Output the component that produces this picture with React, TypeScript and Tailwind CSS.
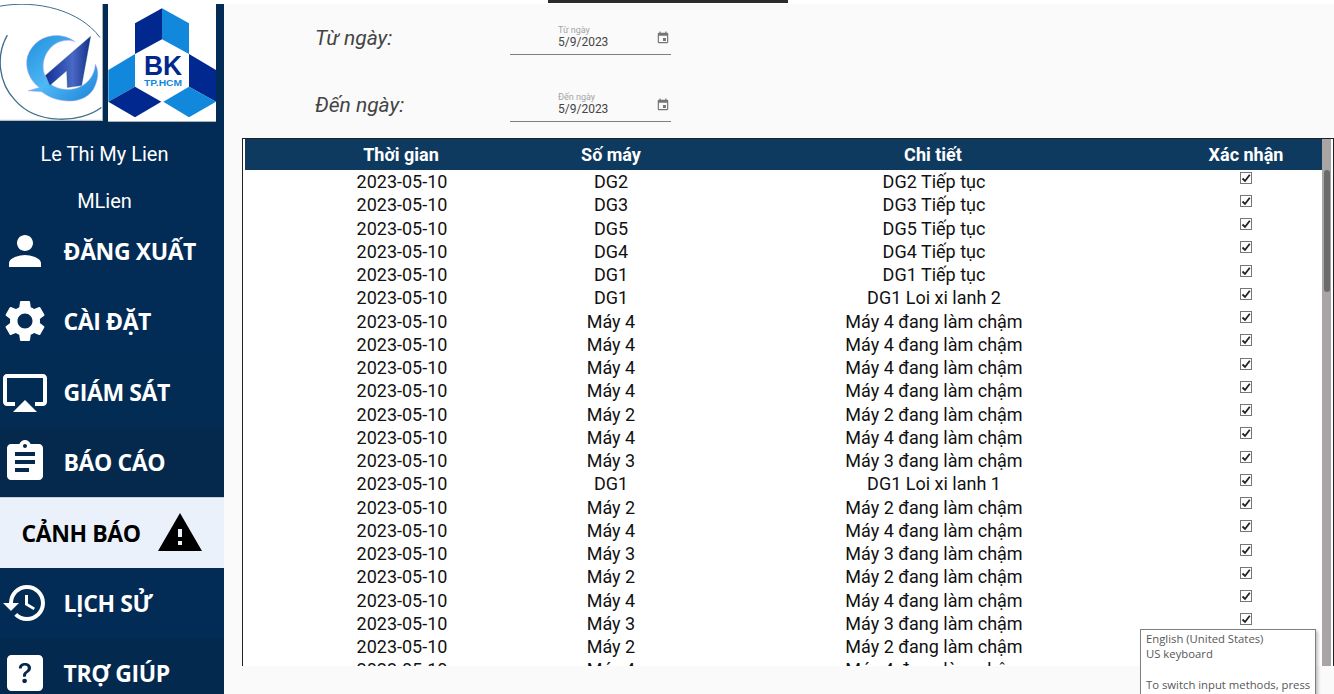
import { MdPerson, MdSettings, MdAirplay, MdAssignment, MdWarning, MdHistory, MdEvent } from 'react-icons/md';
import { BsQuestionSquareFill } from 'react-icons/bs';
import type { ReactNode } from 'react';

const rows: [string, string][] = [
  ['DG2', 'DG2 Tiếp tục'],
  ['DG3', 'DG3 Tiếp tục'],
  ['DG5', 'DG5 Tiếp tục'],
  ['DG4', 'DG4 Tiếp tục'],
  ['DG1', 'DG1 Tiếp tục'],
  ['DG1', 'DG1 Loi xi lanh 2'],
  ['Máy 4', 'Máy 4 đang làm chậm'],
  ['Máy 4', 'Máy 4 đang làm chậm'],
  ['Máy 4', 'Máy 4 đang làm chậm'],
  ['Máy 4', 'Máy 4 đang làm chậm'],
  ['Máy 2', 'Máy 2 đang làm chậm'],
  ['Máy 4', 'Máy 4 đang làm chậm'],
  ['Máy 3', 'Máy 3 đang làm chậm'],
  ['DG1', 'DG1 Loi xi lanh 1'],
  ['Máy 2', 'Máy 2 đang làm chậm'],
  ['Máy 4', 'Máy 4 đang làm chậm'],
  ['Máy 3', 'Máy 3 đang làm chậm'],
  ['Máy 2', 'Máy 2 đang làm chậm'],
  ['Máy 4', 'Máy 4 đang làm chậm'],
  ['Máy 3', 'Máy 3 đang làm chậm'],
  ['Máy 2', 'Máy 2 đang làm chậm'],
  ['Máy 4', 'Máy 4 đang làm chậm'],
];

function LogoApp() {
  return (
    <svg viewBox="0 12 309 350" className="h-[117px] w-[103px] bg-white">
      <defs>
        <linearGradient id="crescent" x1="0" y1="0" x2="1" y2="1">
          <stop offset="0" stopColor="#1f8fdc" />
          <stop offset="0.5" stopColor="#4fb8f5" />
          <stop offset="1" stopColor="#1c82d8" />
        </linearGradient>
        <linearGradient id="dart" x1="0" y1="0" x2="1" y2="0">
          <stop offset="0" stopColor="#12309a" />
          <stop offset="0.6" stopColor="#4a68c4" />
          <stop offset="1" stopColor="#122f8c" />
        </linearGradient>
      </defs>
      <path d="M0 18 C110 -2 240 30 300 112" fill="none" stroke="#3f6f8c" strokeWidth="3" />
      <path d="M22 105 C-15 170 -2 250 45 300 C110 375 240 370 304 322" fill="none" stroke="#3f6f8c" strokeWidth="4" />
      <path
        d="M225 125 C185 92 105 100 82 170 C72 215 100 250 118 262 L84 272 L125 275 C170 312 262 318 286 255 C296 230 296 210 286 192 C282 250 225 282 170 262 C125 245 112 175 160 135 C185 118 210 118 225 125 Z"
        fill="url(#crescent)"
        stroke="#b9a8f2"
        strokeWidth="1.5"
      />
      <path d="M272 108 L245 256 L202 262 L200 212 L150 255 L136 226 Z" fill="url(#dart)" stroke="#1d6a6a" strokeWidth="1" />
      <rect x="306" y="12" width="3" height="350" fill="#aab2b8" />
      <rect x="0" y="359" width="309" height="3" fill="#aab2b8" />
    </svg>
  );
}

function LogoBk() {
  return (
    <svg viewBox="324 12 324 354" className="h-[118px] w-[108px] bg-white">
      <path d="M405 70 L486 25 L486 118 L405 162 Z" fill="#00288f" />
      <path d="M486 25 L567 70 L567 162 L486 118 Z" fill="#1288dc" />
      <path d="M325 210 L405 162 L405 260 L325 305 Z" fill="#1288dc" />
      <path d="M567 162 L648 210 L648 305 L567 260 Z" fill="#00288f" />
      <path d="M325 305 L405 260 L484 305 L405 352 Z" fill="#00288f" />
      <path d="M490 305 L567 260 L648 305 L567 352 Z" fill="#1288dc" />
      <text x="489" y="224" textAnchor="middle" textLength="114" lengthAdjust="spacingAndGlyphs" fontFamily="'Liberation Sans', sans-serif" fontWeight="700" fontSize="82" fill="#00288f">
        BK
      </text>
      <text x="489" y="257" textAnchor="middle" textLength="114" lengthAdjust="spacingAndGlyphs" fontFamily="'Liberation Sans', sans-serif" fontWeight="700" fontSize="29" fill="#1288dc">
        TP.HCM
      </text>
      <rect x="324" y="363" width="324" height="3" fill="#aab2b8" />
    </svg>
  );
}

function NavItem({ icon, label, bg }: { icon: ReactNode; label: string; bg: string }) {
  return (
    <div className={`flex h-[70.33px] shrink-0 items-center gap-[13.5px] ${bg}`}>
      <div className="flex w-[50px] shrink-0 justify-center text-white">{icon}</div>
      <span className="text-[23px] font-bold tracking-[-0.4px] text-white">{label}</span>
    </div>
  );
}

function DateField({ title, label }: { title: string; label: string }) {
  return (
    <div className="flex items-end">
      <div className="w-[286px] pb-[3px] pl-[91px] text-[21px] italic leading-[28px] text-[#444444]">{title}</div>
      <div className="flex h-[33px] w-[161px] items-start justify-between border-b border-[#808080] pl-[48px] pr-[1px]">
        <div className="pt-[4px]">
          <div className="text-[9px] leading-[9px] text-[#a3a3a3]">{label}</div>
          <div className="text-[12px] leading-[15px] text-[#444444]">5/9/2023</div>
        </div>
        <MdEvent className="mt-[9px] text-[#757575]" size={14} />
      </div>
    </div>
  );
}

export default function App() {
  return (
    <div className="flex h-screen flex-col overflow-hidden bg-white font-['Roboto',sans-serif]">
      {/* thanh tối phía trên */}
      <div className="absolute left-[548px] top-0 h-[3px] w-[240px] bg-[#2b2b2b]" />
      <div className="h-[4px] shrink-0 bg-white" />

      <div className="flex min-h-0 flex-1">
        {/* SIDEBAR */}
        <aside className="flex w-[224px] shrink-0 flex-col overflow-hidden bg-[#022b55]">
          <div className="flex h-[120px] shrink-0 items-start gap-[5px]">
            <LogoApp />
            <LogoBk />
          </div>
          <div className="flex h-[60px] shrink-0 items-center justify-center pr-[15px] text-[20px] text-white">Le Thi My Lien</div>
          <div className="flex h-[32px] shrink-0 items-center justify-center pt-[2px] pr-[15px] text-[20px] text-white">MLien</div>
          <div className="font-['Open_Sans',sans-serif]">
            <NavItem icon={<MdPerson size={48} />} label="ĐĂNG XUẤT" bg="bg-[#022b55]" />
            <NavItem icon={<MdSettings size={50} />} label="CÀI ĐẶT" bg="bg-[#022b55]" />
            <NavItem icon={<MdAirplay size={48} />} label="GIÁM SÁT" bg="bg-[#032c55]" />
            <NavItem icon={<MdAssignment size={48} />} label="BÁO CÁO" bg="bg-[#05294d]" />
            <div className="flex h-[70.33px] shrink-0 items-center gap-[15px] border-t border-[#c5d0dc] bg-[#eaf1fb] pl-[21.5px]">
              <span className="text-[23px] font-bold tracking-[-0.4px] text-black">CẢNH BÁO</span>
              <MdWarning className="text-black" size={48} />
            </div>
            <NavItem icon={<MdHistory size={48} />} label="LỊCH SỬ" bg="bg-[#022b55]" />
            <NavItem icon={<BsQuestionSquareFill size={36} />} label="TRỢ GIÚP" bg="bg-[#04294f]" />
          </div>
        </aside>

        {/* NỘI DUNG */}
        <main className="flex min-w-0 flex-1 flex-col bg-[#fafafa]">
          <div className="flex h-[134px] shrink-0 flex-col gap-[34px] pt-[18px]">
            <DateField title="Từ ngày:" label="Từ ngày" />
            <DateField title="Đến ngày:" label="Đến ngày" />
          </div>

          <div className="ml-[18px] flex h-[528px] shrink-0 overflow-hidden border-x border-t border-[#222222] bg-white">
            <div className="min-w-0 flex-1 pl-[2px]">
              <div className="grid h-[31px] grid-cols-[312px_108px_536px_90px] items-center bg-[#0f3a5f] text-center text-[18px] font-bold text-white">
                <div>Thời gian</div>
                <div>Số máy</div>
                <div>Chi tiết</div>
                <div>Xác nhận</div>
              </div>
              {rows.map(([machine, detail], i) => (
                <div key={i} className="grid h-[23.25px] grid-cols-[312px_106px_540px_84px] items-center pl-[1px] text-center text-[18px] leading-[23px] text-[#111111]">
                  <div>2023-05-10</div>
                  <div>{machine}</div>
                  <div>{detail}</div>
                  <div className="flex justify-center pb-[8px]">
                    <span className="flex h-[12px] w-[12px] items-center justify-center border border-[#767676] bg-white">
                      <svg viewBox="0 0 10 10" className="h-[10px] w-[10px]">
                        <path d="M1.5 5.5 L4 8 L8.8 1.8" fill="none" stroke="#222222" strokeWidth="1.8" />
                      </svg>
                    </span>
                  </div>
                </div>
              ))}
            </div>
            {/* thanh cuộn */}
            <div className="mr-[2px] w-[9px] shrink-0 bg-[#a9a5a5] pl-[2px] pr-[1px] pt-[31px]">
              <div className="h-[122px] rounded-[3px] bg-[#6b6b6b]" />
            </div>
          </div>
        </main>
      </div>

      {/* tooltip bàn phím */}
      <div className="absolute left-[1140px] top-[629px] h-[70px] w-[176px] whitespace-nowrap border border-[#808080] bg-white px-[5px] pt-[1px] font-['Open_Sans',sans-serif] text-[11.3px] leading-[15px] text-[#575757] shadow-[2px_2px_3px_rgba(0,0,0,0.25)]">
        <div>English (United States)</div>
        <div>US keyboard</div>
        <div className="mt-[16px]">To switch input methods, press</div>
      </div>
    </div>
  );
}
